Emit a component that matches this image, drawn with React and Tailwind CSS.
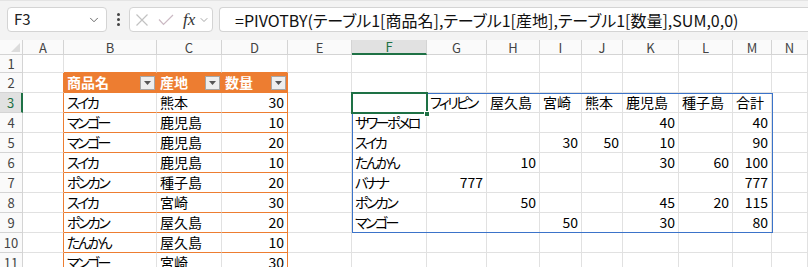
import React from "react";
import { ChevronDown } from "lucide-react";

const COLS = ["", "A", "B", "C", "D", "E", "F", "G", "H", "I", "J", "K", "L", "M", "N"];

const tableRows = [
  ["スイカ", "熊本", 30],
  ["マンゴー", "鹿児島", 10],
  ["マンゴー", "鹿児島", 20],
  ["スイカ", "鹿児島", 10],
  ["ポンカン", "種子島", 20],
  ["スイカ", "宮崎", 30],
  ["ポンカン", "屋久島", 20],
  ["たんかん", "屋久島", 10],
  ["マンゴー", "宮崎", 30],
];

const pivotHeader = ["", "フィリピン", "屋久島", "宮崎", "熊本", "鹿児島", "種子島", "合計"];

// label, then G..M
const pivotRows = [
  ["サワーポメロ", "", "", "", "", 40, "", 40],
  ["スイカ", "", "", 30, 50, 10, "", 90],
  ["たんかん", "", 10, "", "", 30, 60, 100],
  ["バナナ", 777, "", "", "", "", "", 777],
  ["ポンカン", "", 50, "", "", 45, 20, 115],
  ["マンゴー", "", "", 50, "", 30, "", 80],
];

// kana in the sheet font are narrow, squeeze them a bit
const Ja = ({ text }) =>
  String(text)
    .split(/([\u3040-\u30ff]+)/)
    .map((part, i) =>
      /[\u3040-\u30ff]/.test(part) ? (
        <span key={i} className="tracking-[-2.5px]">
          {part}
        </span>
      ) : (
        <span key={i}>{part}</span>
      )
    );

const FilterButton = () => (
  <span className="absolute right-[1px] top-[3px] flex h-[14px] w-[15px] items-center justify-center border border-[#a6a6a6] bg-[#eeeeee]">
    <svg width="7" height="4" viewBox="0 0 7 4">
      <path d="M0 0h7L3.5 4z" fill="#555" />
    </svg>
  </span>
);

const getCell = (row, c) => {
  // row: 1..11, c: column index (1 = A)
  if (row === 2 && c >= 2 && c <= 4) {
    const labels = ["商品名", "産地", "数量"];
    return { kind: "thead", text: labels[c - 2] };
  }
  if (row >= 3 && row <= 11 && c >= 2 && c <= 4) {
    const v = tableRows[row - 3][c - 2];
    return { kind: "tbody", text: v, right: c === 4 };
  }
  if (row === 3 && c >= 6 && c <= 13) {
    return { kind: "cell", text: pivotHeader[c - 6] };
  }
  if (row >= 4 && row <= 9 && c >= 6 && c <= 13) {
    const v = pivotRows[row - 4][c - 6];
    return { kind: "cell", text: v, right: c !== 6 };
  }
  return { kind: "cell", text: "" };
};

const Cell = ({ row, c }) => {
  const cell = getCell(row, c);
  const inTable = row >= 2 && row <= 11;
  let border = "border-r border-b border-[#e1e1e1]";
  if (cell.kind === "thead") {
    border = "border-b border-[#ed7d31] border-r border-r-[#ed7d31]";
  } else if (cell.kind === "tbody") {
    border = "border-b border-b-[#ed7d31] border-r " + (c === 4 ? "border-r-[#ed7d31]" : "border-r-[#e1e1e1]");
  } else if (c === 1 && inTable) {
    border = "border-b border-b-[#e1e1e1] border-r border-r-[#ed7d31]";
  } else if (row === 1 && c >= 2 && c <= 4) {
    border = "border-r border-r-[#e1e1e1] border-b border-b-[#ed7d31]";
  }

  if (cell.kind === "thead") {
    return (
      <div className={`relative flex items-center bg-[#ed7d31] pl-[3px] text-[14px] font-bold text-white ${border}`}>
        {cell.text}
        <FilterButton />
      </div>
    );
  }

  const isText = typeof cell.text === "string";

  return (
    <div
      className={`flex items-center overflow-visible whitespace-nowrap bg-white px-[3px] text-[14px] text-black ${border} ${
        cell.right ? "justify-end" : "justify-start"
      }`}
    >
      {isText ? <Ja text={cell.text} /> : cell.text}
    </div>
  );
};

const App = () => {
  const rows = [1, 2, 3, 4, 5, 6, 7, 8, 9, 10, 11];

  return (
    <div className="h-[267px] w-[808px] overflow-hidden bg-white [font-family:'Noto_Sans_CJK_JP','Noto_Sans',sans-serif] [font-feature-settings:'palt']">
      {/* formula bar */}
      <div className="flex h-[40px] items-start border-t border-t-[#e4e4e4] bg-[#f3f3f3] pt-[6px]">
        <div className="ml-[7px] flex h-[25px] w-[100px] items-center justify-between rounded-[4px] border border-[#d4d4d4] bg-white pl-[6px] pr-[5px]">
          <span className="text-[15px] text-[#222]">F3</span>
          <ChevronDown size={14} strokeWidth={1.5} color="#555" />
        </div>
        <div className="flex h-[25px] w-[22px] flex-col items-center justify-center gap-[2px]">
          <span className="h-[3px] w-[3px] rounded-full bg-[#444]" />
          <span className="h-[3px] w-[3px] rounded-full bg-[#444]" />
          <span className="h-[3px] w-[3px] rounded-full bg-[#444]" />
        </div>
        <div className="flex h-[25px] w-[84px] items-center rounded-[4px] border border-[#d4d4d4] bg-white pl-[5px]">
          <svg width="14" height="14" viewBox="0 0 14 14" className="mr-[9px]">
            <path d="M1.5 1.5l11 11M12.5 1.5l-11 11" stroke="#c2c2c2" strokeWidth="1.2" fill="none" />
          </svg>
          <svg width="16" height="12" viewBox="0 0 16 12" className="mr-[9px]">
            <path d="M1 5.5l4.5 5L15 1" stroke="#cbb9c3" strokeWidth="1.2" fill="none" />
          </svg>
          <span className="text-[17px] italic leading-none text-[#333] [font-family:'Liberation_Serif',serif]">
            fx
          </span>
          <ChevronDown size={12} strokeWidth={1.5} color="#888" className="ml-[3px]" />
        </div>
        <div className="ml-[6px] flex h-[25px] flex-1 items-center whitespace-nowrap rounded-l-[4px] border border-r-0 border-[#d4d4d4] bg-white pl-[15px] text-[16px] text-[#111]">
          =PIVOTBY(テーブル1[商品名],テーブル1[産地],テーブル1[数量],SUM,0,0)
        </div>
      </div>

      {/* grid */}
      <div className="relative">
        <div className="grid grid-cols-[23px_41px_93px_65px_66px_64px_75px_60px_53px_42px_41px_56px_54px_39px_36px] grid-rows-[15px_18px_repeat(10,20px)]">
          {/* column headers */}
          {COLS.map((col, i) =>
            i === 0 ? (
              <div key="corner" className="relative border-r border-b border-[#d4d4d4] bg-[#fafafa]">
                <svg width="9" height="9" viewBox="0 0 9 9" className="absolute right-[2px] bottom-[2px]">
                  <path d="M9 0v9H0z" fill="#dcdcdc" />
                </svg>
              </div>
            ) : col === "F" ? (
              <div
                key={col}
                className="flex items-center justify-center border-r border-[#d4d4d4] border-b-2 border-b-[#1e7145] bg-[#e1e1e1] text-[13px] leading-none text-[#1e7145]"
              >
                {col}
              </div>
            ) : (
              <div
                key={col}
                className="flex items-center justify-center border-r border-b border-[#d4d4d4] bg-[#fafafa] text-[13px] leading-none text-[#444]"
              >
                {col}
              </div>
            )
          )}

          {rows.map((row) => (
            <React.Fragment key={row}>
              {row === 3 ? (
                <div className="flex items-center justify-center border-b border-[#d4d4d4] border-r-2 border-r-[#1e7145] bg-[#e1e1e1] text-[13px] text-[#1e7145]">
                  {row}
                </div>
              ) : (
                <div className="flex items-center justify-center border-r border-b border-[#d4d4d4] bg-[#fafafa] text-[13px] text-[#444]">
                  {row}
                </div>
              )}
              {COLS.slice(1).map((col, i) => (
                <Cell key={col} row={row} c={i + 1} />
              ))}
            </React.Fragment>
          ))}
        </div>

        {/* spill range border */}
        <div className="pointer-events-none absolute left-[352px] top-[53px] h-[140px] w-[421px] border border-[#3b73c9]" />
        {/* active cell */}
        <div className="pointer-events-none absolute left-[351px] top-[52px] h-[22px] w-[77px] border-2 border-[#1e7145]" />
        <div className="pointer-events-none absolute left-[424px] top-[71px] h-[6px] w-[6px] border border-white bg-[#1e7145]" />
      </div>
    </div>
  );
};

export default App;
